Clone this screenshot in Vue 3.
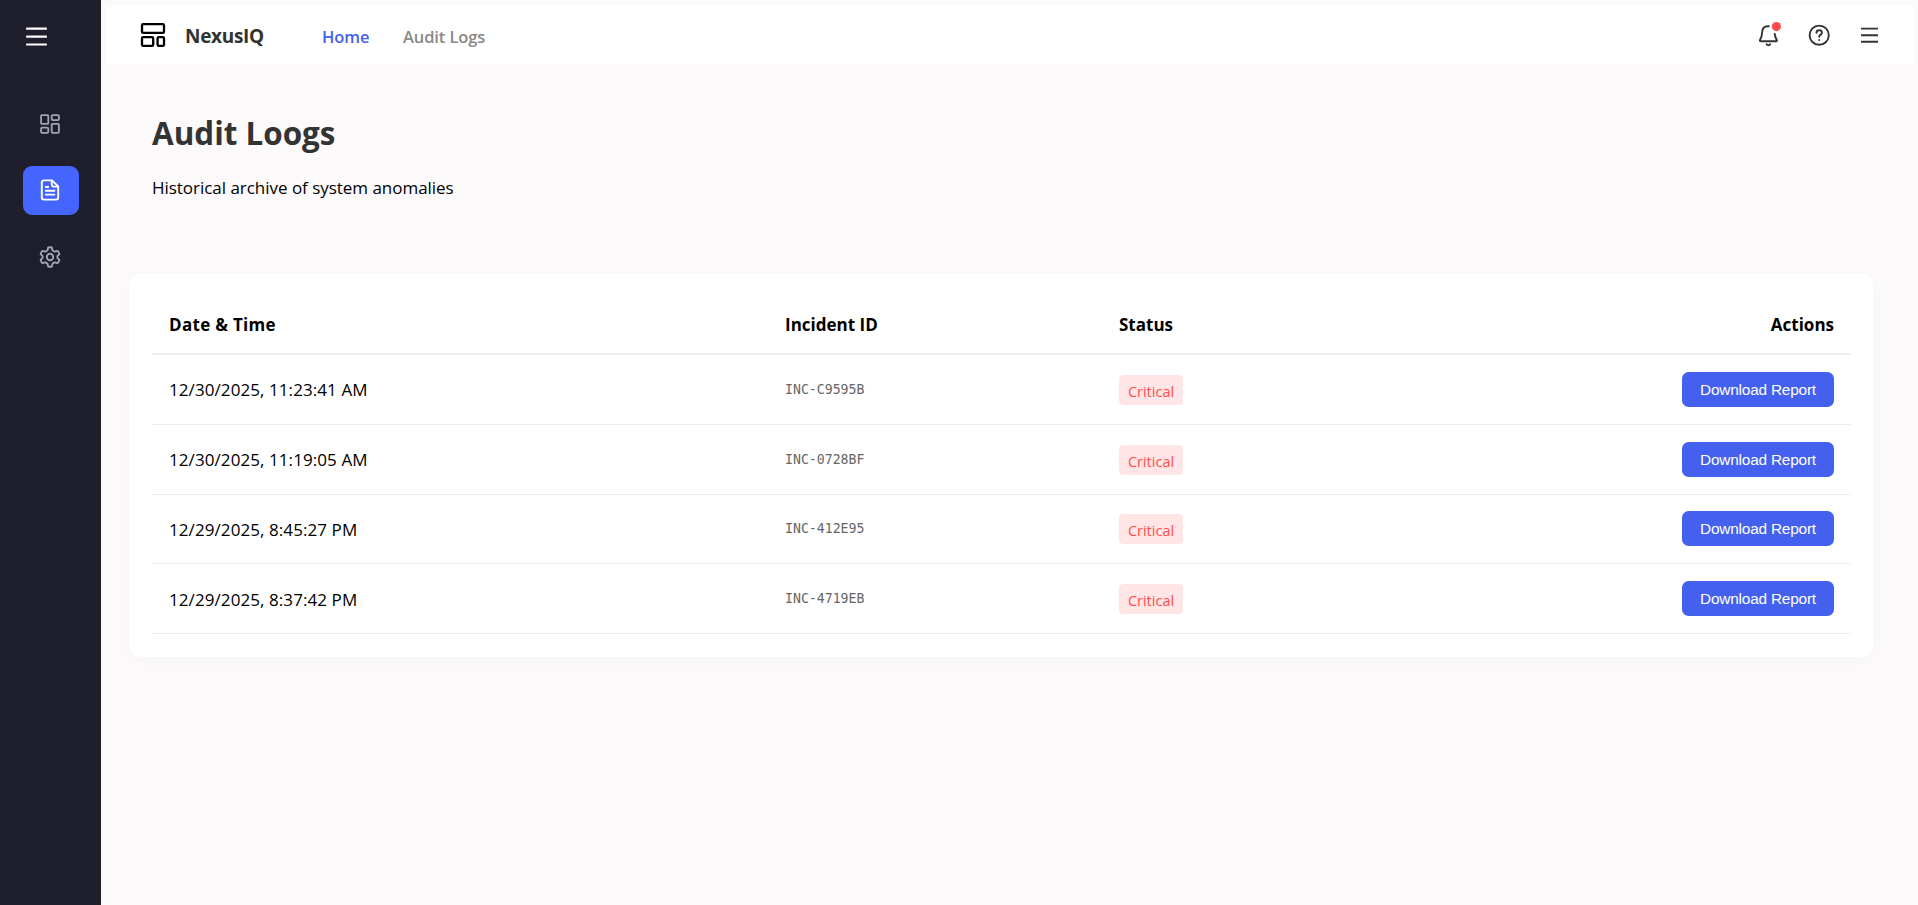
<template>
  <div class="layout">
    <aside class="sidebar">
      <button class="sidebar-toggle">
        <svg width="22" height="20" viewBox="0 0 22 20" fill="none" stroke="currentColor" stroke-width="2.2" stroke-linecap="round">
          <path d="M2 1.7h19M2 9.6h19M2 17.5h19" />
        </svg>
      </button>
      <nav class="side-nav">
        <a class="side-link">
          <svg width="22" height="22" viewBox="0 0 22 22" fill="none" stroke="currentColor" stroke-width="1.8">
            <rect x="2.1" y="2.1" width="7.2" height="8.8" rx="1" />
            <rect x="12.7" y="2.1" width="7.2" height="5" rx="1" />
            <rect x="12.7" y="10.8" width="7.2" height="9" rx="1" />
            <rect x="2.1" y="14.6" width="7.2" height="5.2" rx="1" />
          </svg>
        </a>
        <a class="side-link active">
          <svg width="22" height="22" viewBox="0 0 22 22" fill="none" stroke="currentColor" stroke-width="1.9" stroke-linecap="round" stroke-linejoin="round">
            <path d="M13 1.4H4.8a2 2 0 0 0-2 2v15.2a2 2 0 0 0 2 2h12.4a2 2 0 0 0 2-2V7.4z" />
            <path d="M12.8 1.8v3.8a2 2 0 0 0 2 2h4M6.8 8h2.4M6.8 11.8h8.6M6.8 15.6h8.6" />
          </svg>
        </a>
        <a class="side-link">
          <svg width="22" height="22" viewBox="0 0 22 22" fill="none" stroke="currentColor" stroke-width="1.9" stroke-linejoin="round">
            <path d="M9.2 1.5q1.8-.6 3.6 0l.8 3 2.1 1.2 2.900-.8q1.400 1.400 1.800 3.200l-2 2v1.800l2 2q-.4 1.800-1.800 3.200l-2.900-.8-2.100 1.200-.8 3q-1.800.6-3.600 0l-.8-3-2.100-1.200-2.900.8q-1.400-1.400-1.800-3.200l2-2v-1.800l-2-2q.4-1.800 1.800-3.200l2.900.8 2.100-1.200z" />
            <circle cx="11" cy="11" r="3.2" />
          </svg>
        </a>
      </nav>
    </aside>

    <div class="main">
      <header class="topbar">
        <svg class="logo" width="26" height="26" viewBox="0 0 26 26" fill="none" stroke="currentColor" stroke-width="2.3">
          <rect x="2" y="2.1" width="22" height="8.8" rx="1.2" />
          <rect x="2" y="15.1" width="11.2" height="8.8" rx="1.2" />
          <rect x="17.6" y="15.1" width="6.4" height="8.8" rx="1.2" />
        </svg>
        <span class="brand">NexusIQ</span>
        <nav class="top-nav">
          <a class="top-link active">Home</a>
          <a class="top-link logs">Audit Logs</a>
        </nav>
        <div class="top-actions">
          <svg width="24" height="24" viewBox="0 0 24 24" fill="none" stroke="currentColor" stroke-width="1.9" stroke-linecap="round" stroke-linejoin="round">
            <path d="M12.8 3.2h-1.200C8.100 3.200 6.400 5.600 6.200 9c-.2 4-.8 5.800-2.200 8-.4.7 0 1.300.8 1.300H20c.8 0 1.200-.6.8-1.300-1.200-2-1.700-3.500-2.100-6" />
            <path d="M10.600 21.300c.8 1.300 2.800 1.300 3.600 0" />
            <circle class="dot" cx="20.400" cy="3.600" r="4.600" />
          </svg>
          <svg width="24" height="24" viewBox="0 0 24 24" fill="none" stroke="currentColor" stroke-width="1.9" stroke-linecap="round">
            <circle cx="12.2" cy="12.2" r="9.6" />
            <path d="M9.500 9.700c0-3.200 5.400-3.200 5.400 0 0 2-2.700 2-2.700 4M12.200 16.900v.2" />
          </svg>
          <svg width="24" height="24" viewBox="0 0 24 24" fill="none" stroke="currentColor" stroke-width="1.9">
            <path d="M4 5.600h17M4 12.200h17M4 18.800h17" />
          </svg>
        </div>
      </header>

      <section class="page-head">
        <h1>Audit Loogs</h1>
        <p>Historical archive of system anomalies</p>
      </section>

      <section class="card">
        <table class="log-table">
          <thead>
            <tr>
              <th class="col-date">Date &amp; Time</th>
              <th class="col-id">Incident ID</th>
              <th class="col-status">Status</th>
              <th class="col-actions">Actions</th>
            </tr>
          </thead>
          <tbody>
            <tr v-for="log in logs" :key="log.id">
              <td class="log-time">{{ log.time }}</td>
              <td><span class="incident-id">{{ log.id }}</span></td>
              <td><span class="badge">{{ log.status }}</span></td>
              <td class="col-actions"><button class="download-btn">Download Report</button></td>
            </tr>
          </tbody>
        </table>
      </section>
    </div>
  </div>
</template>

<script setup>
import { ref } from 'vue'

const logs = ref([
  { id: 'INC-C9595B', time: '12/30/2025, 11:23:41 AM', status: 'Critical' },
  { id: 'INC-0728BF', time: '12/30/2025, 11:19:05 AM', status: 'Critical' },
  { id: 'INC-412E95', time: '12/29/2025, 8:45:27 PM', status: 'Critical' },
  { id: 'INC-4719EB', time: '12/29/2025, 8:37:42 PM', status: 'Critical' }
])
</script>

<style>
body {
  margin: 0;
  background: #fbf9fa;
}
</style>

<style scoped>
.layout {
  display: flex;
  min-height: 100vh;
  font-family: "Open Sans", "Noto Sans", sans-serif;
  font-size: 17px;
  color: #000;
}
.sidebar {
  width: 101px;
  flex-shrink: 0;
  background: #1e1e2d;
}
.sidebar-toggle {
  display: block;
  margin: 27px 0 0 25px;
  padding: 0;
  border: none;
  background: none;
  color: #fff;
  cursor: pointer;
}
.sidebar-toggle svg,
.side-link svg,
.logo {
  display: block;
}
.side-nav {
  display: flex;
  flex-direction: column;
  gap: 17.6px;
  margin: 52px 22px 0 23px;
}
.side-link {
  display: flex;
  align-items: center;
  justify-content: center;
  height: 49px;
  padding-right: 2px;
  border-radius: 9px;
  color: #a2a3b7;
}
.side-link.active {
  background: #4565ff;
  color: #fff;
}
.main {
  flex: 1;
  min-width: 0;
}
.topbar {
  display: flex;
  align-items: center;
  height: 58px;
  margin: 6px 4px 0 6px;
  padding: 0 33px;
  box-sizing: border-box;
  background: #fff;
}
.brand {
  margin-left: 19px;
  padding-top: 1px;
  width: 80px;
  font-size: 19px;
  font-weight: 700;
  letter-spacing: -0.3px;
  color: #333;
}
.top-nav {
  display: flex;
  margin-left: 57px;
  padding-top: 2px;
}
.top-link {
  width: 47px;
  font-size: 16.5px;
  font-weight: 600;
  letter-spacing: -0.1px;
  color: #888;
  white-space: nowrap;
}
.top-link.active {
  color: #4361ee;
}
.top-link.logs {
  margin-left: 34px;
}
.top-actions {
  display: flex;
  gap: 26.5px;
  margin-left: auto;
  color: #333;
}
.top-actions svg {
  overflow: visible;
}
.dot {
  fill: #ff4d4f;
  stroke: none;
}
.page-head {
  padding: 46px 51px 0;
}
.page-head h1 {
  margin: 0;
  padding-top: 1px;
  font-size: 31.4px;
  line-height: 44px;
  font-weight: 700;
  color: #333;
}
.page-head p {
  margin: 21px 0 0;
  line-height: 24px;
  letter-spacing: -0.03px;
}
.card {
  margin: 73px 45px 0 28px;
  padding: 23px 22px 23px 23px;
  border-radius: 13px;
  background: #fff;
  box-shadow: 0 4px 22px rgba(0, 0, 0, 0.02);
}
.log-table {
  width: 100%;
  table-layout: fixed;
  border-collapse: separate;
  border-spacing: 0;
}
.log-table th {
  height: 57px;
  padding: 0 17px;
  border-bottom: 2px solid #eee;
  text-align: left;
  font-weight: 700;
}
.log-table th.col-date {
  letter-spacing: 0.3px;
}
.log-table td {
  height: 68.8px;
  padding: 0 17px;
  border-bottom: 1px solid #eee;
}
.log-table .log-time {
  padding-top: 1px;
  height: 67.8px;
  letter-spacing: 0.08px;
}
.col-date {
  width: 582px;
}
.col-id {
  width: 300px;
}
.col-status {
  width: 300px;
}
.log-table .col-actions {
  text-align: right;
}
.incident-id {
  display: block;
  font-family: "DejaVu Sans Mono", monospace;
  font-size: 13.2px;
  color: #666;
}
.badge {
  display: flex;
  align-items: center;
  justify-content: center;
  width: 64px;
  height: 30px;
  margin-top: 1px;
  padding-top: 3px;
  box-sizing: border-box;
  border-radius: 4.4px;
  background: #ffe5e5;
  color: #ff4d4f;
  font-size: 14.5px;
}
.download-btn {
  width: 152px;
  height: 35px;
  padding: 1px 0 0;
  border: none;
  border-radius: 6.6px;
  background: #4361ee;
  color: #fff;
  font-family: "Liberation Sans", Arial, sans-serif;
  font-size: 15.4px;
  letter-spacing: -0.2px;
  cursor: pointer;
}
</style>
